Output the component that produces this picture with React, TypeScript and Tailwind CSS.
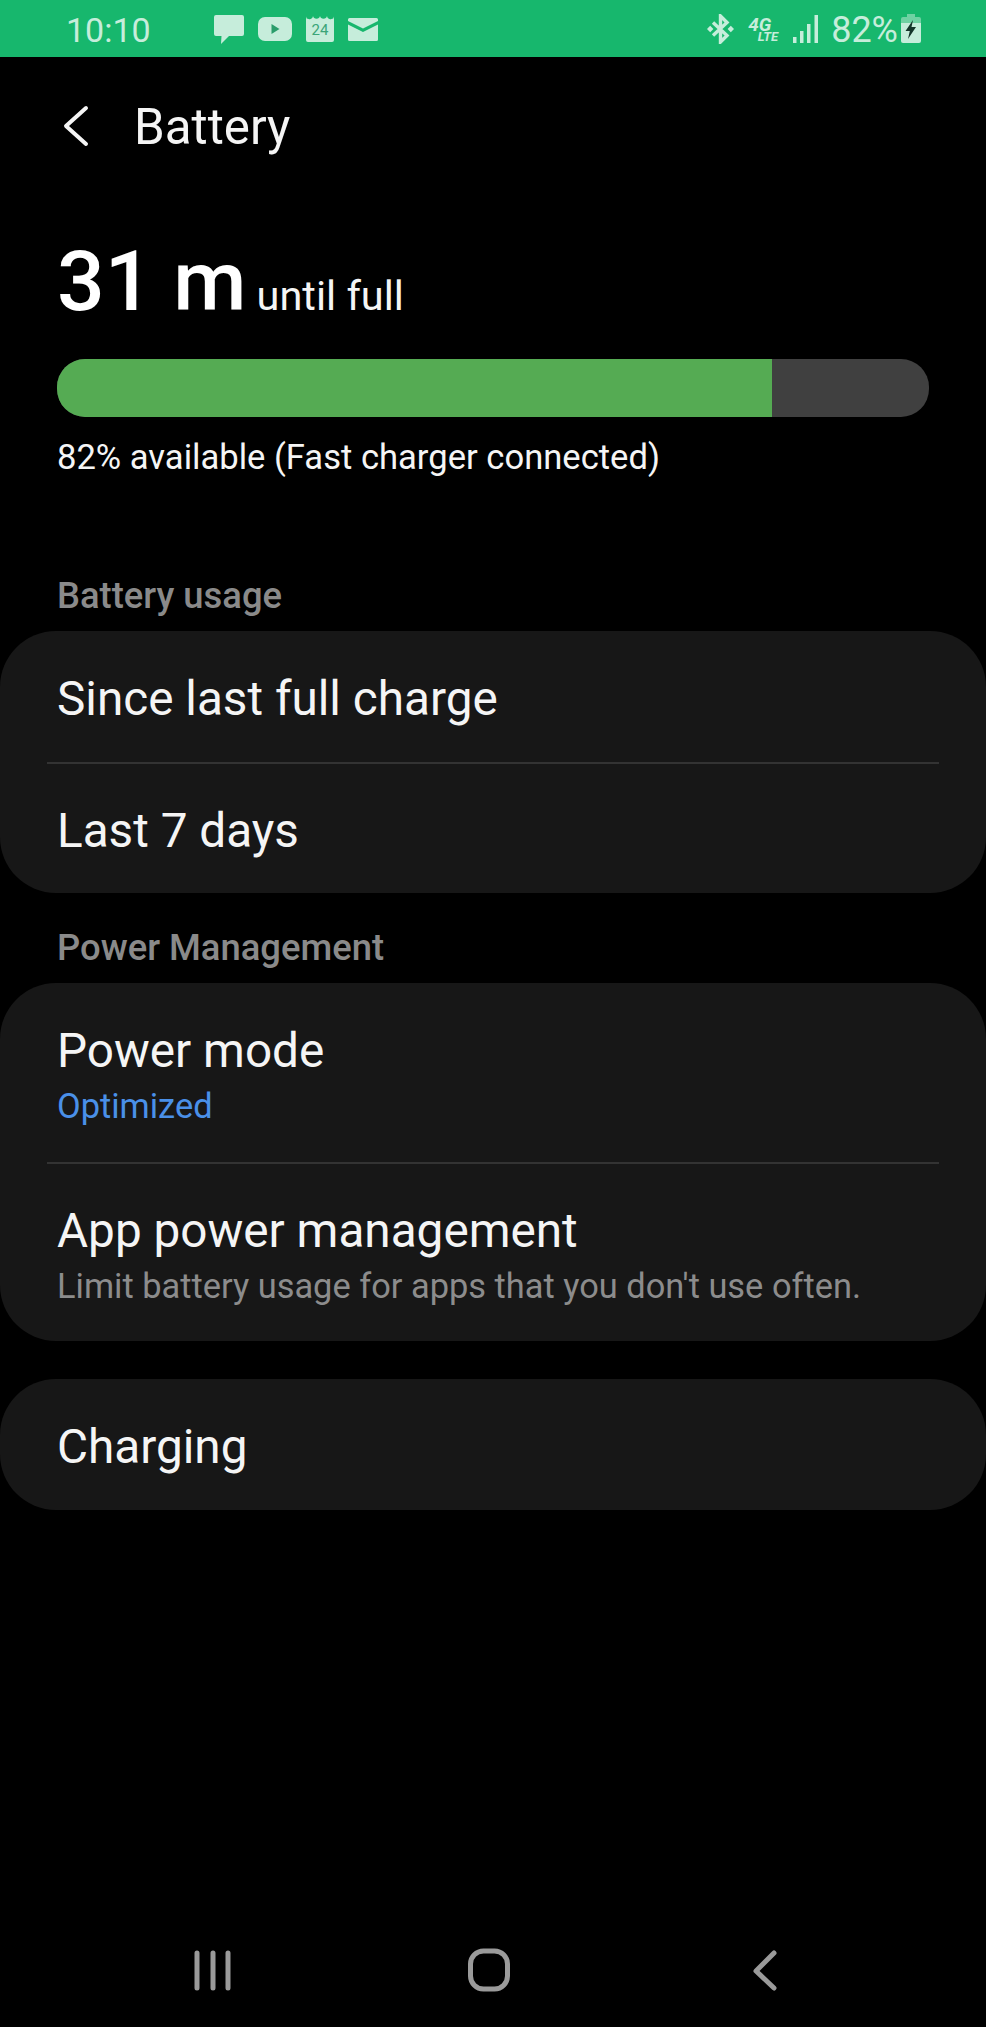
const roboto = 'font-["Roboto",sans-serif]';

function MessageIcon() {
  return (
    <svg width="30" height="29" viewBox="0 0 30 29" className="fill-[#c6eddb]">
      <path d="M2 0h26a2 2 0 0 1 2 2v17a2 2 0 0 1-2 2H15l-8 8 .5-8H2a2 2 0 0 1-2-2V2a2 2 0 0 1 2-2z" />
    </svg>
  );
}

function PlayIcon() {
  return (
    <svg width="34" height="24" viewBox="0 0 34 24">
      <rect width="34" height="24" rx="7" fill="#c6eddb" />
      <path d="M13.5 7l8 5-8 5z" fill="#2a9d6b" />
    </svg>
  );
}

function CalendarIcon() {
  return (
    <div className="relative w-[28px] h-[27px]">
      <svg width="28" height="27" viewBox="0 0 28 27" className="fill-[#c6eddb]">
        <path d="M0 1.5a2.6 2.6 0 0 0 2.6 2.5h0A3.4 3.4 0 0 0 7 1a3.6 3.6 0 0 0 7 0 3.6 3.6 0 0 0 7 0 3.4 3.4 0 0 0 4.4 3A2.6 2.6 0 0 0 28 1.5V25a2 2 0 0 1-2 2H2a2 2 0 0 1-2-2z" />
      </svg>
      <span className={`absolute left-0 right-0 top-[6px] text-center text-[15px] leading-[18px] text-[#3aa578] ${roboto}`}>24</span>
    </div>
  );
}

function MailIcon() {
  return (
    <svg width="30" height="23" viewBox="0 0 30 23" className="fill-[#c6eddb]">
      <path d="M0 1.5A1.5 1.5 0 0 1 1.5 0h27A1.5 1.5 0 0 1 30 1.5V3L15 10.5 0 3z" />
      <path d="M0 6.5l15 7.5 15-7.5v15a1.5 1.5 0 0 1-1.5 1.5h-27A1.5 1.5 0 0 1 0 21.5z" />
    </svg>
  );
}

function BluetoothIcon() {
  return (
    <svg width="27" height="30" viewBox="0 0 27 30" fill="none">
      <path d="M6 8.5l14 13L13.5 28V2L20 8.5l-14 13" stroke="#c6eddb" strokeWidth="3.4" strokeLinejoin="miter" />
      <path d="M0 15l3.2-3.2L6.4 15l-3.2 3.2zM20.6 15l3.2-3.2L27 15l-3.2 3.2z" fill="#c6eddb" />
    </svg>
  );
}

function SignalIcon() {
  return (
    <svg width="26" height="28" viewBox="0 0 26 28" className="fill-[#c6eddb]">
      <rect x="0" y="22" width="3.5" height="6" />
      <rect x="7" y="16" width="3.5" height="12" />
      <rect x="14" y="9" width="3.5" height="19" />
      <rect x="21.5" y="0" width="3.5" height="28" />
    </svg>
  );
}

function BatteryIcon() {
  return (
    <svg width="20" height="29" viewBox="0 0 20 29">
      <path d="M6 0h8v3h4a2 2 0 0 1 2 2v6H0V5a2 2 0 0 1 2-2h4z" fill="#6fd2a3" />
      <path d="M0 9h20v18a2 2 0 0 1-2 2H2a2 2 0 0 1-2-2z" fill="#c6eddb" />
      <path d="M12 6L4.5 17h4.3L7 25l8-12h-4.5z" fill="#15352a" />
    </svg>
  );
}

function StatusBar() {
  return (
    <div className={`h-[57px] bg-[#17b76d] flex items-center text-[#c6eddb] ${roboto}`}>
      <span className="ml-[66px] w-[90px] text-[34px] leading-none pt-[2px]">10:10</span>
      <div className="ml-[58px] flex items-center gap-[14px]">
        <div className="pt-[2px]"><MessageIcon /></div>
        <PlayIcon />
        <CalendarIcon />
        <div className="pt-[2px]"><MailIcon /></div>
      </div>
      <div className="ml-auto mr-[65px] flex items-center">
        <BluetoothIcon />
        <div className="ml-[14px] w-[30px] flex flex-col italic font-bold leading-none pt-[3px]">
          <span className="text-[19px] leading-[13px]">4G</span>
          <span className="text-[13px] leading-[11px] self-end">LTE</span>
        </div>
        <div className="ml-[15px]"><SignalIcon /></div>
        <span className="ml-[12px] text-[36px] leading-none pt-[2px]">82%</span>
        <div className="ml-[3px]"><BatteryIcon /></div>
      </div>
    </div>
  );
}

function Divider() {
  return <div className="mx-[47px] h-[2px] bg-[#333333]" />;
}

function Row({ title, sub, subClass, height }: { title: string; sub?: string; subClass?: string; height: string }) {
  return (
    <div className={`${height} px-[57px] pt-[4px] flex flex-col justify-center`}>
      <span className="text-[47.7px] leading-[62px] text-[#f5f5f5]">{title}</span>
      {sub && <span className={`text-[34.4px] leading-[48px] ${subClass}`}>{sub}</span>}
    </div>
  );
}

export default function App() {
  return (
    <div className={`min-h-[2027px] bg-black flex flex-col ${roboto}`}>
      <StatusBar />

      {/* Header */}
      <div className="h-[138px] flex items-center">
        <svg width="28" height="42" viewBox="0 0 28 42" fill="none" className="ml-[61px]">
          <path d="M25 3L5 21l20 18" stroke="#f5f5f5" strokeWidth="4" strokeLinecap="round" strokeLinejoin="round" />
        </svg>
        <span className="ml-[45px] pt-[4px] text-[49.3px] leading-none text-[#f5f5f5]">Battery</span>
      </div>

      {/* Charge summary */}
      <div className="px-[57px] pt-[37px]">
        <div className="flex items-baseline h-[100px]">
          <span className="text-[84px] leading-[100px] font-medium text-white">31 m</span>
          <span className="ml-[10px] text-[41.5px] leading-none text-[#f5f5f5]">until full</span>
        </div>
        <div className="mt-[27px] h-[58px] rounded-[28px] bg-[#404040] overflow-hidden">
          <div className="h-full w-[82%] bg-[#55ab53]" />
        </div>
        <p className="mt-[18px] text-[34.6px] leading-[44px] text-[#f5f5f5]">82% available (Fast charger connected)</p>
      </div>

      {/* Battery usage */}
      <p className="mt-[95px] px-[57px] text-[36.4px] leading-[44px] font-medium text-[#8a8a8a]">Battery usage</p>
      <div className="mt-[13px] rounded-[56px] bg-[#171717]">
        <Row title="Since last full charge" height="h-[131px]" />
        <Divider />
        <Row title="Last 7 days" height="h-[129px]" />
      </div>

      {/* Power management */}
      <p className="mt-[33px] px-[57px] text-[36.4px] leading-[44px] font-medium text-[#8a8a8a]">Power Management</p>
      <div className="mt-[13px] rounded-[56px] bg-[#171717]">
        <Row title="Power mode" sub="Optimized" subClass="text-[#4a90e8]" height="h-[179px]" />
        <Divider />
        <Row title="App power management" sub="Limit battery usage for apps that you don't use often." subClass="text-[#8c8c8c]" height="h-[177px]" />
      </div>

      <div className="mt-[38px] rounded-[56px] bg-[#171717]">
        <Row title="Charging" height="h-[131px]" />
      </div>

      {/* Nav bar */}
      <div className="mt-auto h-[100px] relative">
        <div className="flex items-start pt-[23px]">
          <svg width="40" height="42" viewBox="0 0 40 42" fill="none" className="ml-[192px]" stroke="#9a9a9a" strokeWidth="5" strokeLinecap="round">
            <path d="M5 3v35M21 3v35M36 3v35" />
          </svg>
          <svg width="44" height="44" viewBox="0 0 44 44" fill="none" className="ml-[235px] -mt-[2px]">
            <rect x="3.5" y="3" width="37" height="38" rx="13" stroke="#9a9a9a" strokeWidth="5" />
          </svg>
          <svg width="26" height="42" viewBox="0 0 26 42" fill="none" className="ml-[241px]" stroke="#9a9a9a" strokeWidth="5" strokeLinecap="round" strokeLinejoin="round">
            <path d="M22 3L4 21l18 17" />
          </svg>
        </div>
      </div>
    </div>
  );
}
